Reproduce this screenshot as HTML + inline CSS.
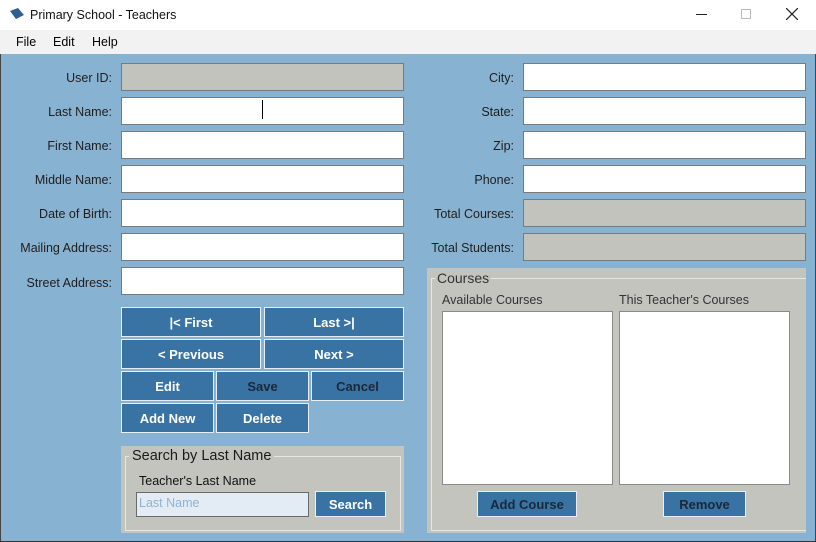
<!DOCTYPE html>
<html><head><style>
*{margin:0;padding:0;box-sizing:border-box}
body{width:816px;height:542px;overflow:hidden;font-family:"Liberation Sans",sans-serif;font-size:13px;position:relative;background:#88b2d2}
.a{position:absolute}
.lbl{position:absolute;text-align:right;color:#1e1e1e;font-size:12.5px}
.tb{position:absolute;background:#fff;border:1px solid #7a7a7a}
.g{background:#c3c3bd}
.btn{position:absolute;background:#3873a3;border:1px solid #e8eef4;color:#fff;font-weight:bold;font-size:13px;display:flex;align-items:center;justify-content:center}
.dk{color:#1c2838}
</style></head><body>
<div class="a" style="left:0;top:0;width:816px;height:32px;background:#fff"></div>
<svg class="a" style="left:9px;top:7px" width="16" height="14"><path d="M1 4 L9 1 L15 8 L7 12 Z" fill="#2e5f8e"/></svg>
<div class="a" style="left:30px;top:8px;font-size:12.5px;color:#111">Primary School - Teachers</div>
<div class="a" style="left:696px;top:14px;width:11px;height:1px;background:#222"></div>
<div class="a" style="left:741px;top:9px;width:10px;height:10px;border:1px solid #bbb"></div>
<svg class="a" style="left:786px;top:8px" width="12" height="12"><path d="M0 0L12 12M12 0L0 12" stroke="#222" stroke-width="1.2"/></svg>
<div class="a" style="left:0;top:30px;width:816px;height:24px;background:#f2f2f2"></div>
<div class="a" style="left:16px;top:35px;font-size:12.5px">File</div>
<div class="a" style="left:53px;top:35px;font-size:12.5px">Edit</div>
<div class="a" style="left:92px;top:35px;font-size:12.5px">Help</div>
<div class="a" style="left:0;top:54px;width:1px;height:488px;background:#444"></div>
<div class="a" style="left:815px;top:54px;width:1px;height:488px;background:#444"></div>
<div class="a" style="left:0;top:541px;width:816px;height:1px;background:#333"></div>

<div class="lbl" style="left:0;width:112px;top:71px">User ID:</div>
<div class="tb g" style="left:121px;top:63px;width:283px;height:28px"></div>
<div class="lbl" style="left:0;width:112px;top:105px">Last Name:</div>
<div class="tb" style="left:121px;top:97px;width:283px;height:28px"></div>
<div class="a" style="left:262px;top:100px;width:1px;height:19px;background:#000"></div>
<div class="lbl" style="left:0;width:112px;top:139px">First Name:</div>
<div class="tb" style="left:121px;top:131px;width:283px;height:28px"></div>
<div class="lbl" style="left:0;width:112px;top:173px">Middle Name:</div>
<div class="tb" style="left:121px;top:165px;width:283px;height:28px"></div>
<div class="lbl" style="left:0;width:112px;top:207px">Date of Birth:</div>
<div class="tb" style="left:121px;top:199px;width:283px;height:28px"></div>
<div class="lbl" style="left:0;width:112px;top:241px">Mailing Address:</div>
<div class="tb" style="left:121px;top:233px;width:283px;height:28px"></div>
<div class="lbl" style="left:0;width:112px;top:276px">Street Address:</div>
<div class="tb" style="left:121px;top:267px;width:283px;height:28px"></div>

<div class="lbl" style="left:400px;width:114px;top:71px">City:</div>
<div class="tb" style="left:523px;top:63px;width:283px;height:28px"></div>
<div class="lbl" style="left:400px;width:114px;top:105px">State:</div>
<div class="tb" style="left:523px;top:97px;width:283px;height:28px"></div>
<div class="lbl" style="left:400px;width:114px;top:139px">Zip:</div>
<div class="tb" style="left:523px;top:131px;width:283px;height:28px"></div>
<div class="lbl" style="left:400px;width:114px;top:173px">Phone:</div>
<div class="tb" style="left:523px;top:165px;width:283px;height:28px"></div>
<div class="lbl" style="left:400px;width:114px;top:207px">Total Courses:</div>
<div class="tb g" style="left:523px;top:199px;width:283px;height:28px"></div>
<div class="lbl" style="left:400px;width:114px;top:241px">Total Students:</div>
<div class="tb g" style="left:523px;top:233px;width:283px;height:28px"></div>

<div class="btn" style="left:121px;top:307px;width:140px;height:30px">|&lt; First</div>
<div class="btn" style="left:264px;top:307px;width:140px;height:30px">Last &gt;|</div>
<div class="btn" style="left:121px;top:339px;width:140px;height:30px">&lt; Previous</div>
<div class="btn" style="left:264px;top:339px;width:140px;height:30px">Next &gt;</div>
<div class="btn" style="left:121px;top:371px;width:93px;height:30px">Edit</div>
<div class="btn dk" style="left:216px;top:371px;width:93px;height:30px">Save</div>
<div class="btn dk" style="left:311px;top:371px;width:93px;height:30px">Cancel</div>
<div class="btn" style="left:121px;top:403px;width:93px;height:30px">Add New</div>
<div class="btn" style="left:216px;top:403px;width:93px;height:30px">Delete</div>

<div class="a" style="left:121px;top:446px;width:283px;height:87px;background:#c4c4be"></div>
<div class="a" style="left:125px;top:456px;width:276px;height:75px;border:1px solid #e6e6e2"></div>
<div class="a" style="left:129px;top:448px;padding:0 3px;background:#c4c4be;font-size:14.5px;color:#1a1a1a">Search by Last Name</div>
<div class="a" style="left:139px;top:474px;font-size:12.5px;color:#111">Teacher's Last Name</div>
<div class="a" style="left:136px;top:492px;width:173px;height:25px;background:#e3ebf5;border:1px solid #6a6a6a;color:#8fb4d4;font-size:12.5px;padding:3px 2px">Last Name</div>
<div class="btn" style="left:315px;top:491px;width:71px;height:26px">Search</div>

<div class="a" style="left:427px;top:268px;width:379px;height:265px;background:#c4c4be"></div>
<div class="a" style="left:431px;top:278px;width:375px;height:253px;border:1px solid #e6e6e2;border-right:none"></div>
<div class="a" style="left:435px;top:270px;padding:0 2px;background:#c4c4be;font-size:14px;color:#333">Courses</div>
<div class="a" style="left:442px;top:293px;font-size:12.5px;color:#333">Available Courses</div>
<div class="a" style="left:619px;top:293px;font-size:12.5px;color:#333">This Teacher's Courses</div>
<div class="tb" style="left:442px;top:311px;width:171px;height:174px;border-color:#8a8a8a"></div>
<div class="tb" style="left:619px;top:311px;width:171px;height:174px;border-color:#8a8a8a"></div>
<div class="btn dk" style="left:477px;top:491px;width:100px;height:26px">Add Course</div>
<div class="btn dk" style="left:663px;top:491px;width:83px;height:26px">Remove</div>
</body></html>
